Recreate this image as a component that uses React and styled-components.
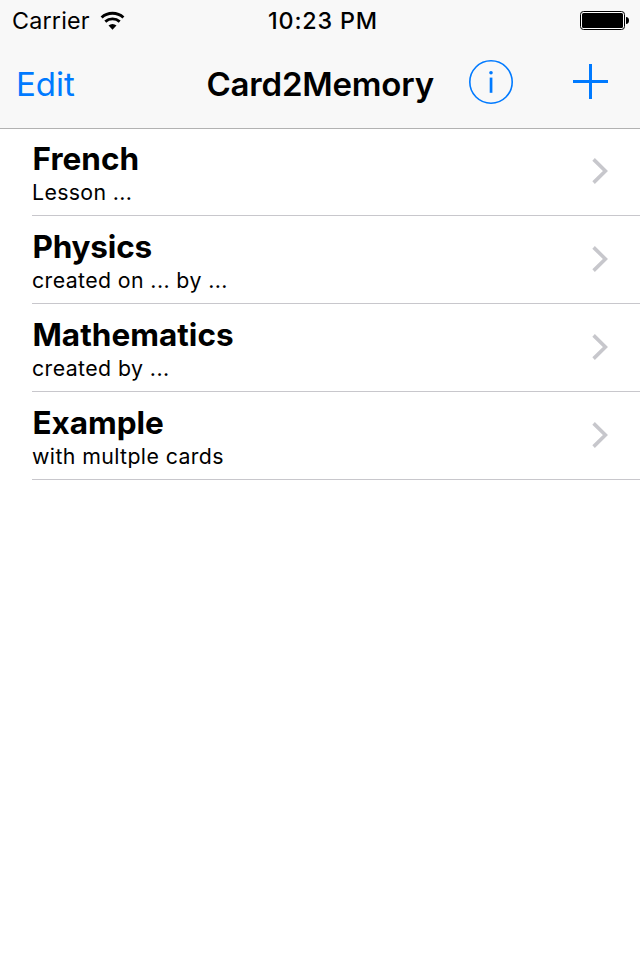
import styled, { createGlobalStyle } from "styled-components"

const decks = [
    { title: "French", detail: "Lesson ...", titleSpacing: 0.05, detailSpacing: 0.35 },
    { title: "Physics", detail: "created on ... by ...", titleSpacing: -0.2, detailSpacing: 0.4 },
    { title: "Mathematics", detail: "created by ...", titleSpacing: 0.02, detailSpacing: 0.42 },
    { title: "Example", detail: "with multple cards", titleSpacing: -0.05, detailSpacing: 0.4 },
]

export default function App() {
    return (
        <Screen>
            <GlobalStyle />
            <Header>
                <StatusBar>
                    <Carrier>
                        <span>Carrier</span>
                        <WifiIcon />
                    </Carrier>
                    <Clock>10:23 PM</Clock>
                    <BatteryIcon />
                </StatusBar>
                <NavBar>
                    <EditButton>Edit</EditButton>
                    <NavTitle>Card2Memory</NavTitle>
                    <Actions>
                        <IconButton aria-label="Info">
                            <InfoIcon />
                        </IconButton>
                        <IconButton aria-label="Add">
                            <PlusIcon />
                        </IconButton>
                    </Actions>
                </NavBar>
            </Header>
            <List>
                {decks.map(deck => (
                    <Row key={deck.title}>
                        <RowText>
                            <RowTitle $spacing={deck.titleSpacing}>{deck.title}</RowTitle>
                            <RowDetail $spacing={deck.detailSpacing}>{deck.detail}</RowDetail>
                        </RowText>
                        <ChevronIcon />
                    </Row>
                ))}
            </List>
        </Screen>
    )
}

function WifiIcon() {
    return (
        <svg width="26" height="20" viewBox="0 0 26 20" fill="none" stroke="#000000">
            <path d="M1.6 6.5 A16.4 16.4 0 0 1 23.4 6.5" strokeWidth="3" />
            <path d="M5.3 10.6 A10.8 10.8 0 0 1 19.7 10.6" strokeWidth="2.8" />
            <path d="M8.5 14.6 A6 6 0 0 1 16.5 14.6 L12.5 18.7 Z" fill="#000000" stroke="none" />
        </svg>
    )
}

function BatteryIcon() {
    return (
        <svg width="49" height="19" viewBox="0 0 49 19">
            <rect x="0.5" y="0.5" width="44" height="18" rx="3" fill="#ffffff" stroke="#000000" />
            <rect x="2" y="2" width="41" height="15" rx="1.5" fill="#000000" />
            <path d="M46 6 C48 6.2 49 7.2 49 9.5 C49 11.8 48 12.8 46 13 Z" fill="#000000" />
        </svg>
    )
}

function InfoIcon() {
    return (
        <svg width="44" height="44" viewBox="0 0 44 44">
            <circle cx="22" cy="22" r="21.2" fill="none" stroke="#007aff" strokeWidth="1.6" />
            <circle cx="22" cy="12.7" r="1.8" fill="#007aff" />
            <rect x="20.7" y="17.6" width="2.7" height="15.2" fill="#007aff" />
        </svg>
    )
}

function PlusIcon() {
    return (
        <svg width="35" height="35" viewBox="0 0 35 35" fill="#007aff">
            <rect x="0" y="16" width="35" height="3" />
            <rect x="16" y="0" width="3" height="35" />
        </svg>
    )
}

function ChevronIcon() {
    return (
        <svg width="16" height="26" viewBox="0 0 16 26" fill="none" stroke="#c7c7cc" strokeWidth="3.6">
            <path d="M1.6 1.4 L13.4 13 L1.6 24.6" />
        </svg>
    )
}

const GlobalStyle = createGlobalStyle`
    * {
        box-sizing: border-box;
    }
    body {
        margin: 0;
        background-color: #ffffff;
        font-family: Inter, "Liberation Sans", sans-serif;
        color: #000000;
    }
    svg {
        display: block;
        flex-shrink: 0;
    }
`
const Screen = styled.div`
    width: 640px;
    height: 960px;
    background-color: #ffffff;
    overflow: hidden;
`
const Header = styled.header`
    height: 128px;
    background-color: #f8f8f8;
    box-shadow: 0 1px 0 #b2b2b2;
`
const StatusBar = styled.div`
    height: 40px;
    padding: 0 11px 0 12px;
    display: grid;
    grid-template-columns: 256px 1fr auto;
    align-items: center;
    font-size: 23.3px;
    line-height: 38px;
`
const Carrier = styled.div`
    padding-top: 2px;
    display: flex;
    align-items: center;
    column-gap: 10px;
    letter-spacing: 0.2px;

    svg {
        margin-top: -1px;
    }
`
const Clock = styled.div`
    padding-top: 2px;
    font-weight: 500;
    letter-spacing: 0.85px;
`
const NavBar = styled.nav`
    height: 88px;
    padding: 0 32px 0 16px;
    display: grid;
    grid-template-columns: 190.5px 1fr auto;
    align-items: center;
`
const EditButton = styled.button`
    border: none;
    background: none;
    padding: 0;
    justify-self: start;
    font-family: inherit;
    font-size: 33px;
    line-height: 88px;
    color: #007aff;
    cursor: pointer;
`
const NavTitle = styled.h1`
    margin: 0;
    font-size: 33px;
    font-weight: 600;
    line-height: 88px;
    letter-spacing: -0.2px;
    white-space: nowrap;
`
const Actions = styled.div`
    display: flex;
    align-items: center;
    column-gap: 60px;
    padding-bottom: 5px;
`
const IconButton = styled.button`
    border: none;
    background: none;
    padding: 0;
    cursor: pointer;
`
const List = styled.ul`
    margin: 0;
    padding: 0 0 0 32px;
    list-style: none;
`
const Row = styled.li`
    height: 88px;
    padding: 0 32px 2px 0;
    border-bottom: 1px solid #c8c7cc;
    display: flex;
    align-items: center;
    justify-content: space-between;
`
const RowText = styled.div`
    padding-top: 3px;
`
const RowTitle = styled.h2`
    margin: 0;
    padding-left: 0.5px;
    font-size: 31.5px;
    font-weight: 700;
    line-height: 40px;
    letter-spacing: ${props => props.$spacing}px;
`
const RowDetail = styled.p`
    margin: 0;
    font-size: 21.3px;
    line-height: 27px;
    letter-spacing: ${props => props.$spacing}px;
`
